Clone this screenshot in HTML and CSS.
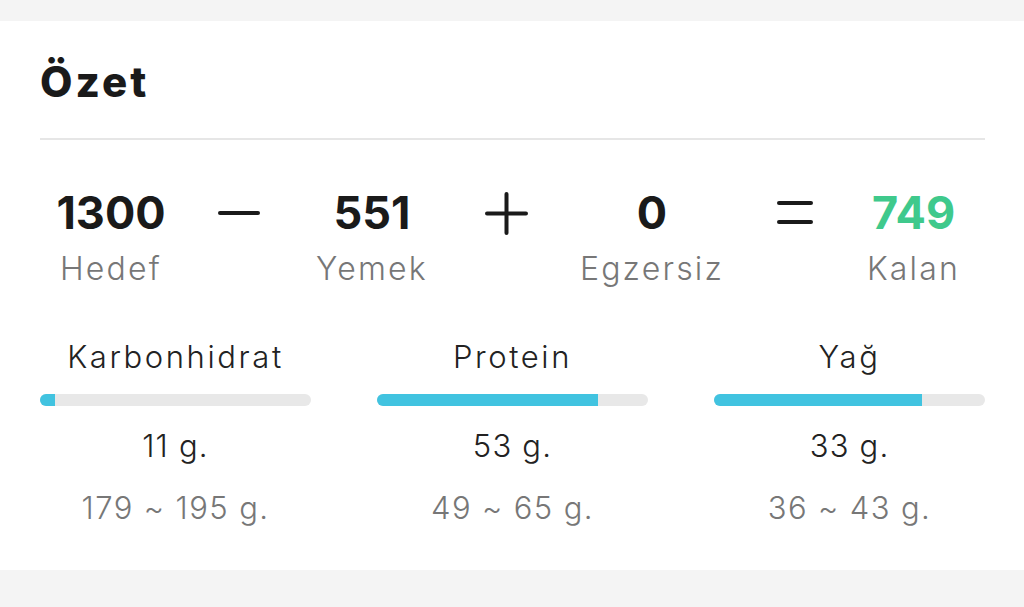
FILE: index.html
```html
<!DOCTYPE html>
<html lang="tr">
  <head>
    <meta charset="UTF-8" />
    <meta name="viewport" content="width=device-width, initial-scale=1.0" />
    <title>Özet</title>
    <link rel="stylesheet" href="styles.css">
  </head>
  <body>
    <main class="card">
      <h1 class="title">Özet</h1>
      <hr class="divider" />

      <div class="totals">
        <div class="total total-goal">
          <div class="total-num">1300</div>
          <div class="total-label">Hedef</div>
        </div>
        <div class="op">
          <svg width="42" height="42" viewBox="0 0 42 42">
            <line x1="2" y1="21" x2="40" y2="21" />
          </svg>
        </div>
        <div class="total total-food">
          <div class="total-num">551</div>
          <div class="total-label">Yemek</div>
        </div>
        <div class="op">
          <svg width="43" height="43" viewBox="0 0 43 43">
            <line x1="2" y1="21.5" x2="41" y2="21.5" />
            <line x1="21.5" y1="2" x2="21.5" y2="41" />
          </svg>
        </div>
        <div class="total total-exercise">
          <div class="total-num">0</div>
          <div class="total-label">Egzersiz</div>
        </div>
        <div class="op">
          <svg width="36" height="36" viewBox="0 0 36 36">
            <line x1="2" y1="8" x2="34" y2="8" />
            <line x1="2" y1="27" x2="34" y2="27" />
          </svg>
        </div>
        <div class="total total-left">
          <div class="total-num green">749</div>
          <div class="total-label">Kalan</div>
        </div>
      </div>

      <div class="macros">
        <div class="macro">
          <div class="macro-name">Karbonhidrat</div>
          <div class="bar"><div class="bar-fill" style="width: 5.6%"></div></div>
          <div class="macro-value">11 g.</div>
          <div class="macro-range">179 ~ 195 g.</div>
        </div>
        <div class="macro">
          <div class="macro-name">Protein</div>
          <div class="bar"><div class="bar-fill" style="width: 81.5%"></div></div>
          <div class="macro-value">53 g.</div>
          <div class="macro-range">49 ~ 65 g.</div>
        </div>
        <div class="macro">
          <div class="macro-name">Yağ</div>
          <div class="bar"><div class="bar-fill" style="width: 76.7%"></div></div>
          <div class="macro-value">33 g.</div>
          <div class="macro-range">36 ~ 43 g.</div>
        </div>
      </div>
    </main>
  </body>
</html>
```

FILE: styles.css
```css
body {
  margin: 0;
  padding: 21px 0 37px;
  background-color: #f4f4f4;
  font-family: Inter, "Noto Sans", sans-serif;
  color: #1c1c1c;
}

.card {
  background-color: #fff;
  height: 549px;
  box-sizing: border-box;
  padding: 36px 39px 0 40px;
}

.title {
  margin: 0;
  font-size: 42px;
  line-height: 50px;
  font-weight: 800;
  letter-spacing: 3px;
  color: #1a1a1a;
}

.divider {
  margin: 31px 0 0;
  border: 0;
  height: 2px;
  background-color: #e6e6e6;
}

.totals {
  display: grid;
  grid-template-columns: 106px 42px 118px 43px 142px 36px 95px;
  justify-content: space-between;
  padding: 0 24px 0 18px;
  margin-top: 46px;
}

.total {
  display: flex;
  flex-direction: column;
  align-items: center;
  white-space: nowrap;
}

.total-num {
  font-size: 45px;
  line-height: 54px;
  font-weight: 700;
  color: #1a1a1a;
}

.total-num.green {
  color: #3fc98c;
}

.total-label {
  margin-top: 9px;
  font-size: 32px;
  line-height: 40px;
  font-weight: 300;
  letter-spacing: 2.2px;
  color: #777;
}

.op {
  height: 54px;
  display: flex;
  align-items: center;
  justify-content: center;
}

.op svg line {
  stroke: #1a1a1a;
  stroke-width: 4;
  stroke-linecap: round;
}

.macros {
  display: grid;
  grid-template-columns: repeat(3, 1fr);
  column-gap: 66px;
  margin-top: 48px;
}

.macro {
  display: flex;
  flex-direction: column;
  align-items: center;
  white-space: nowrap;
}

.macro-name {
  font-size: 31px;
  line-height: 40px;
  font-weight: 300;
  letter-spacing: 2.6px;
  color: #222;
}

.bar {
  width: 100%;
  height: 12px;
  margin-top: 17px;
  border-radius: 6px;
  background-color: #e8e8e8;
  overflow: hidden;
}

.bar-fill {
  height: 100%;
  background-color: #41c3e0;
}

.macro-value {
  margin-top: 20px;
  font-size: 31px;
  line-height: 40px;
  font-weight: 300;
  letter-spacing: 1.2px;
  color: #222;
}

.macro-range {
  margin-top: 22px;
  font-size: 31px;
  line-height: 40px;
  font-weight: 300;
  letter-spacing: 1.4px;
  color: #777;
}
```
